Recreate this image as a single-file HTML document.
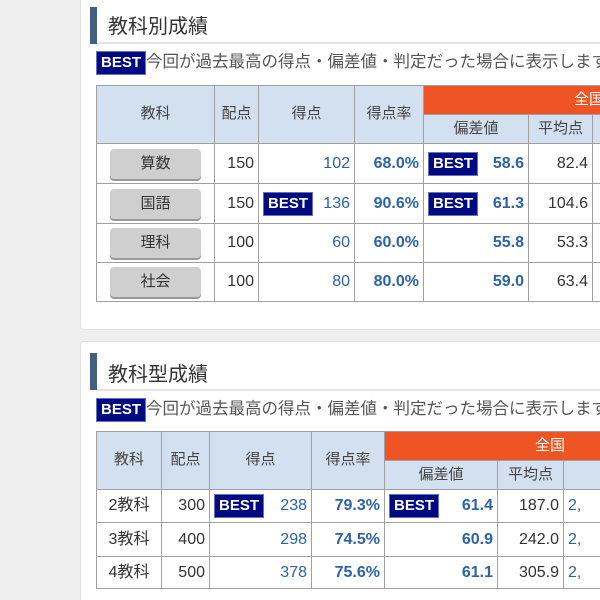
<!DOCTYPE html><html><head><meta charset="utf-8"><style>
html,body{margin:0;width:600px;height:600px;overflow:hidden}
body{background:#efefef;font-family:"Liberation Sans","Noto Sans CJK JP",sans-serif;position:relative}
.card{position:absolute;left:80px;width:560px;background:#fff;border:1px solid #e0e0e0;border-radius:4px}
.bar{position:absolute;left:90px;width:7px;background:#44607f}
.ttl{position:absolute;left:108px;font-size:20px;color:#333;line-height:24px}
.ul{position:absolute;left:97px;width:503px;height:2px;background:#e4e4e4}
.note{position:absolute;left:96px;width:504px;overflow:hidden;font-size:16.5px;color:#555;white-space:nowrap;line-height:24px}
.b{display:inline-block;background:#000a80;color:#fff;font-weight:bold;font-size:15px;border:1px solid #6670c0;line-height:22px;padding:0 4px;vertical-align:middle}
.wrap{position:absolute;left:96px;width:504px;overflow:hidden}
table{border-collapse:collapse;table-layout:fixed;font-size:16px;color:#333;line-height:1.1}
td,th{border:1px solid #a0a0a0;padding:0 4px;overflow:hidden;white-space:nowrap;vertical-align:middle}
th{background:#d3e0ef;font-weight:normal;color:#444;font-size:15px}
th.o{background:#ef5524;color:#fff;text-align:center}
.r{text-align:right}.c{text-align:center}
.bl{color:#2d62a8}.bb{color:#2d62a8;font-weight:bold}
.btn{display:inline-block;width:91px;height:30px;line-height:30px;background:#cfcfcf;border-radius:4px;box-shadow:0 2px 0 #999;color:#333;font-size:15px}
.sp{display:flex;justify-content:space-between;align-items:center}
</style></head><body>
<div class="card" style="top:-10px;height:338px;width:530px"></div>
<div class="card" style="top:341px;height:270px;width:530px"></div>
<div class="bar" style="top:7px;height:37px"></div>
<div class="ttl" style="top:15px">教科別成績</div>
<div class="ul" style="top:42px"></div>
<div class="note" style="top:50px"><span class="b">BEST</span><span>今回が過去最高の得点・偏差値・判定だった場合に表示します</span></div>
<div class="wrap" style="top:85px;height:220px">
<table style="width:604px">
<colgroup><col style="width:118px"><col style="width:44px"><col style="width:96px"><col style="width:69px"><col style="width:105px"><col style="width:64px"><col style="width:108px"></colgroup>
<tr style="height:29px"><th rowspan="2">教科</th><th rowspan="2">配点</th><th rowspan="2">得点</th><th rowspan="2">得点率</th><th class="o" colspan="3" style="padding-left:150px;text-align:left">全国</th></tr>
<tr style="height:29px"><th>偏差値</th><th>平均点</th><th></th></tr>
<tr style="height:40px"><td class="c"><span class="btn">算数</span></td><td class="r">150</td><td class="r bl">102</td><td class="r bb">68.0%</td><td><div class="sp"><span class="b">BEST</span><span class="bb">58.6</span></div></td><td class="r">82.4</td><td></td></tr>
<tr style="height:40px"><td class="c"><span class="btn">国語</span></td><td class="r">150</td><td><div class="sp"><span class="b">BEST</span><span class="bl">136</span></div></td><td class="r bb">90.6%</td><td><div class="sp"><span class="b">BEST</span><span class="bb">61.3</span></div></td><td class="r">104.6</td><td></td></tr>
<tr style="height:39px"><td class="c"><span class="btn">理科</span></td><td class="r">100</td><td class="r bl">60</td><td class="r bb">60.0%</td><td class="r bb">55.8</td><td class="r">53.3</td><td></td></tr>
<tr style="height:39px"><td class="c"><span class="btn">社会</span></td><td class="r">100</td><td class="r bl">80</td><td class="r bb">80.0%</td><td class="r bb">59.0</td><td class="r">63.4</td><td></td></tr>
</table></div>
<div class="bar" style="top:353px;height:37px"></div>
<div class="ttl" style="top:363px">教科型成績</div>
<div class="ul" style="top:389px"></div>
<div class="note" style="top:397px"><span class="b">BEST</span><span>今回が過去最高の得点・偏差値・判定だった場合に表示します</span></div>
<div class="wrap" style="top:431px;height:169px">
<table style="width:604px">
<colgroup><col style="width:65px"><col style="width:48px"><col style="width:102px"><col style="width:73px"><col style="width:113px"><col style="width:66px"><col style="width:137px"></colgroup>
<tr style="height:29px"><th rowspan="2">教科</th><th rowspan="2">配点</th><th rowspan="2">得点</th><th rowspan="2">得点率</th><th class="o" colspan="3" style="padding-left:150px;text-align:left">全国</th></tr>
<tr style="height:29px"><th>偏差値</th><th>平均点</th><th></th></tr>
<tr style="height:33px"><td class="c">2教科</td><td class="r">300</td><td><div class="sp"><span class="b">BEST</span><span class="bl">238</span></div></td><td class="r bb">79.3%</td><td><div class="sp"><span class="b">BEST</span><span class="bb">61.4</span></div></td><td class="r">187.0</td><td class="bl">2,</td></tr>
<tr style="height:34px"><td class="c">3教科</td><td class="r">400</td><td class="r bl">298</td><td class="r bb">74.5%</td><td class="r bb">60.9</td><td class="r">242.0</td><td class="bl">2,</td></tr>
<tr style="height:32px"><td class="c">4教科</td><td class="r">500</td><td class="r bl">378</td><td class="r bb">75.6%</td><td class="r bb">61.1</td><td class="r">305.9</td><td class="bl">2,</td></tr>
</table></div>
</body></html>
